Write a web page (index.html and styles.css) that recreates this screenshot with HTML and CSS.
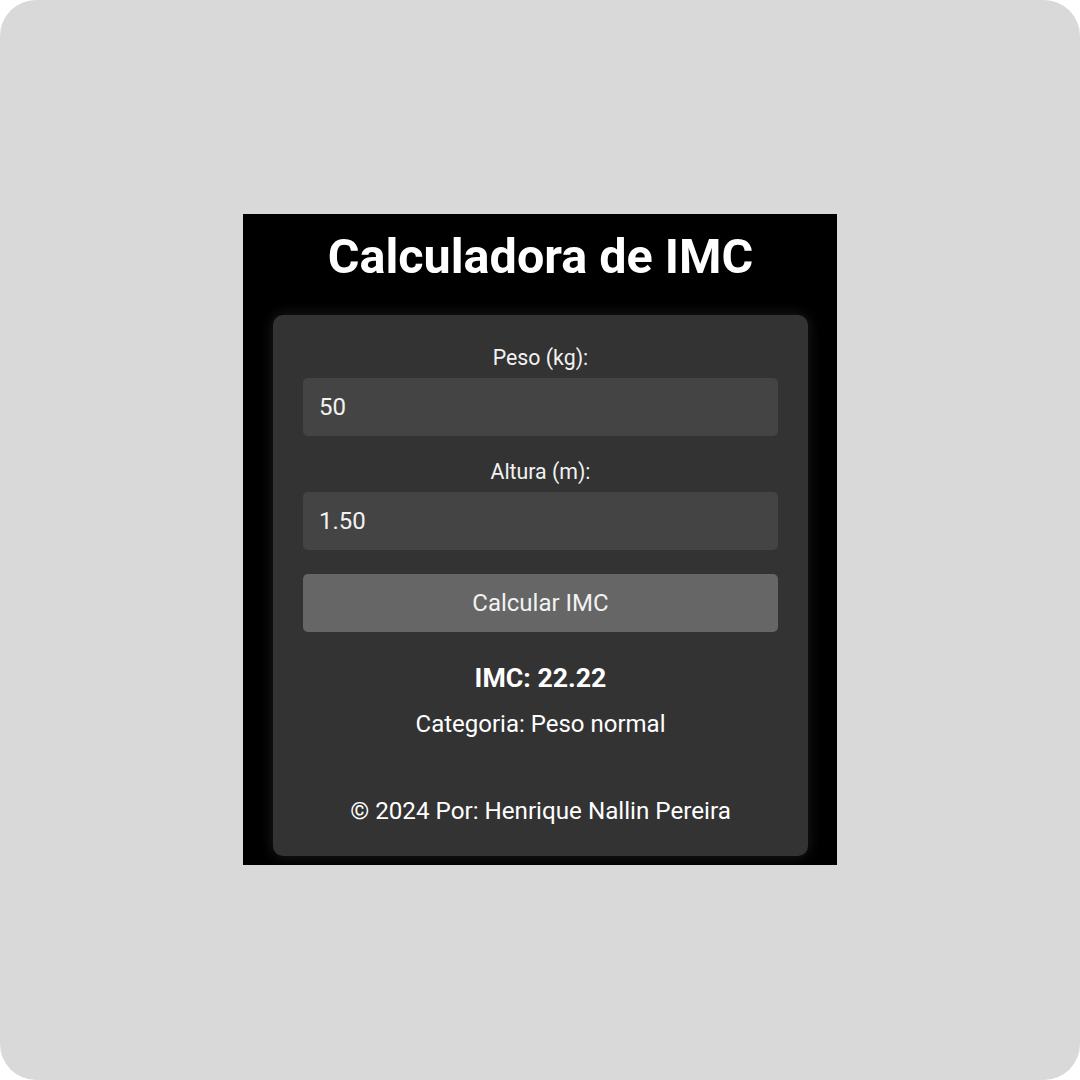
FILE: index.html
```html
<!DOCTYPE html>
<html lang="pt-BR">
<head>
<meta charset="utf-8">
<title>Calculadora de IMC</title>
<link rel="stylesheet" href="styles.css">
</head>
<body>
<div class="page">
  <div class="panel">
    <h1 class="title">Calculadora de IMC</h1>
    <div class="card">
      <label class="label" for="peso">Peso (kg):</label>
      <input class="field" id="peso" type="text" value="50">
      <label class="label" for="altura">Altura (m):</label>
      <input class="field" id="altura" type="text" value="1.50">
      <button class="btn" type="button">Calcular IMC</button>
      <p class="imc">IMC: 22.22</p>
      <p class="cat">Categoria: Peso normal</p>
      <p class="footer">© 2024 Por: Henrique Nallin Pereira</p>
    </div>
  </div>
</div>
</body>
</html>
```

FILE: styles.css
```css
html, body {
  margin: 0;
  padding: 0;
  background: #ffffff;
}
.page {
  width: 1080px;
  height: 1080px;
  background: #d9d9d9;
  border-radius: 36px;
  display: flex;
  align-items: center;
  justify-content: center;
  font-family: Roboto, "Liberation Sans", sans-serif;
}
.panel {
  width: 594px;
  height: 651px;
  box-sizing: border-box;
  background: #000;
  padding: 13px 29px 9px 30px;
  margin-top: -1px;
  display: flex;
  flex-direction: column;
  align-items: stretch;
}
.title {
  margin: 0 0 29px 0;
  text-align: center;
  color: #fff;
  font-size: 48.5px;
  font-weight: 700;
  line-height: 59px;
}
.card {
  flex: 1;
  background: #333;
  border-radius: 10px;
  box-shadow: 0 0 14px rgba(255, 255, 255, 0.12);
  padding: 30px 30px 0 30px;
  display: flex;
  flex-direction: column;
  align-items: stretch;
  color: #fff;
}
.label {
  display: block;
  text-align: center;
  font-size: 21.3px;
  line-height: 25px;
  color: #f2f2f2;
  margin-bottom: 8px;
}
.field {
  display: block;
  height: 58px;
  box-sizing: border-box;
  border: none;
  outline: none;
  border-radius: 5px;
  background: #444;
  color: #f2f2f2;
  font-family: Roboto, "Liberation Sans", sans-serif;
  font-size: 24px;
  padding: 0 16px;
  margin: 0 0 23px 0;
}
.btn {
  display: block;
  height: 58px;
  border: none;
  border-radius: 5px;
  background: #666;
  color: #f2f2f2;
  font-family: Roboto, "Liberation Sans", sans-serif;
  font-size: 24px;
  margin: 1px 0 0 0;
  padding: 0;
}
.imc {
  margin: 31px 0 0 0;
  text-align: center;
  font-size: 26.7px;
  font-weight: 700;
  line-height: 31px;
}
.cat {
  margin: 16px 0 0 0;
  text-align: center;
  font-size: 24px;
  line-height: 28px;
}
.footer {
  margin: 59px 0 0 0;
  text-align: center;
  font-size: 24.2px;
  line-height: 28px;
}
```
